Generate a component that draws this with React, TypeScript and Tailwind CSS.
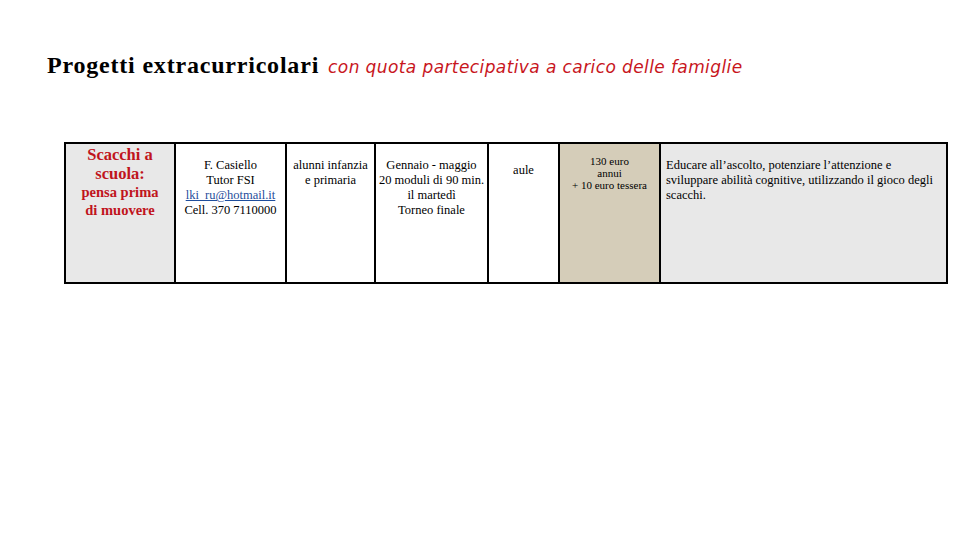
const serif = { fontFamily: '"Liberation Serif", "DejaVu Serif", serif' };

export default function App() {
  return (
    <div className="w-[960px] h-[540px] bg-white overflow-hidden">
      <div className="pt-[52px] pl-[47px] flex items-baseline gap-[9px] h-[92px]">
        <h1 className="text-[24px] leading-[26px] font-bold tracking-[0.8px] text-black font-['Liberation_Serif',serif]">
          Progetti extracurricolari
        </h1>
        <span className="text-[17px] leading-[26px] italic tracking-[0.4px] text-[#c8161d] font-['DejaVu_Sans',sans-serif]">
          con quota partecipativa a carico delle famiglie
        </span>
      </div>

      <div className="mt-[50px] ml-[64px] w-[884px] h-[142px] border-2 border-black grid grid-cols-[108px_111px_89px_113px_71px_101px_1fr] text-black" style={serif}>
        <div className="bg-[#e8e8e8] pt-[1px] text-center font-bold text-[#c0141c]">
          <p className="text-[16.5px] leading-[19px]">Scacchi a<br />scuola:</p>
          <p className="text-[14.5px] leading-[18px]">pensa prima<br />di muovere</p>
        </div>
        <div className="border-l-2 border-black bg-white pt-[14px] text-center text-[12.5px] leading-[15px]">
          F. Casiello<br />
          Tutor FSI<br />
          <span className="text-[#1f4e9c] underline">lki_ru@hotmail.it</span><br />
          Cell. 370 7110000
        </div>
        <div className="border-l-2 border-black bg-white pt-[14px] text-center text-[12.5px] leading-[15px]">
          alunni infanzia<br />e primaria
        </div>
        <div className="border-l-2 border-black bg-white pt-[14px] text-center text-[12.5px] leading-[15px]">
          Gennaio - maggio<br />
          20 moduli di 90 min.<br />
          il martedì<br />
          Torneo finale
        </div>
        <div className="border-l-2 border-black bg-white pt-[19px] text-center text-[12.5px] leading-[15px]">
          aule
        </div>
        <div className="border-l-2 border-black bg-[#d5cdb9] pt-[11px] text-center text-[11px] leading-[12px]">
          130 euro<br />annui<br />+ 10 euro tessera
        </div>
        <div className="border-l-2 border-black bg-[#e8e8e8] pt-[14px] pl-[5px] text-[12.5px] leading-[15px] whitespace-nowrap">
          Educare all’ascolto, potenziare l’attenzione e<br />
          sviluppare abilità cognitive, utilizzando il gioco degli<br />
          scacchi.
        </div>
      </div>
    </div>
  );
}
